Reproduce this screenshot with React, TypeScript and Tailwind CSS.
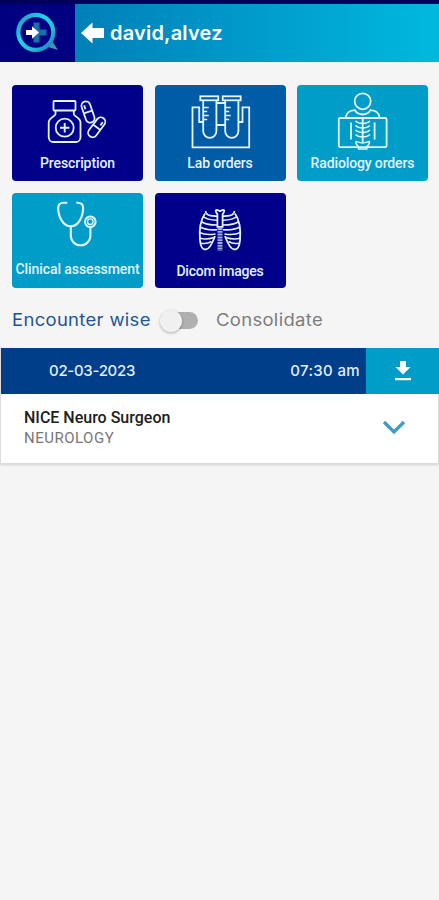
import type { ReactNode } from "react";

type Tile = {
  label: string;
  bg: string;
  labelClass: string;
  icon: ReactNode;
};

const PrescriptionIcon = () => (
  <>
    <rect x="41.5" y="16" width="22" height="9.5" rx="0.8" />
    <path d="M43.5 26v3.2c0 2-6.8 3.2-6.8 8.4v14.6a4.8 4.8 0 0 0 4.8 4.8h22.2a4.8 4.8 0 0 0 4.8-4.8V37.6c0-5.2-6.7-6.4-6.7-8.4V26" />
    <circle cx="52.7" cy="42.7" r="9" />
    <path d="M52.7 38v9.4M48 42.7h9.4" strokeWidth="1.9" />
    <g transform="rotate(-19 76 27)">
      <rect x="71.6" y="16" width="8.8" height="22" rx="4.4" />
      <path d="M71.6 27h8.8M74.5 19.5v4" />
    </g>
    <g transform="rotate(37 84.7 42.3)">
      <rect x="80.2" y="31" width="9" height="22.6" rx="4.5" fill="#00008b" />
      <path d="M80.2 42.3h9M86.5 34.5v4" />
    </g>
  </>
);

const LabIcon = () => (
  <>
    <rect x="45.3" y="11.3" width="18" height="4" />
    <rect x="67.7" y="11.3" width="18" height="4" />
    <path d="M48.2 15.5v30.7a6.6 6.6 0 0 0 13.2 0V15.5M70.2 15.5v30.7a6.6 6.6 0 0 0 13.2 0V15.5" />
    <path d="M48.2 37h-4V22.3h-6.7v40h56.7v-40h-6.7V37h-4M61.5 40h8.7M61.5 18h8.7" />
    <path d="M48.2 22.5h5.5M48.2 26.5h4M48.2 30.5h5.5M48.2 34.5h4M70.2 22.5h5.5M70.2 26.5h4M70.2 30.5h5.5M70.2 34.5h4" strokeWidth="1.3" />
  </>
);

const RadiologyIcon = () => (
  <>
    <circle cx="65.7" cy="16.3" r="8" />
    <path d="M48.8 32.5c.6-4.5 3.7-7 9.2-7.3 1.500 3 4 4.300 7.700 4.300s6.200-1.300 7.700-4.300c5.500.3 8.600 2.800 9.200 7.300" />
    <rect x="41.8" y="33" width="47.8" height="29.2" rx="1.5" />
    <path d="M54 37.5v17M77.6 37.5v17M65.7 33v24" />
    <path d="M58.5 36c2 2 4.500 2.500 7.200 2.500s5.200-.5 7.200-2.500M58.500 40.500c2 2 4.500 2.500 7.200 2.500s5.200-.5 7.200-2.500M58.500 45c2 2 4.500 2.500 7.200 2.500s5.200-.5 7.200-2.500M58.500 49.500c2 2 4.500 2.500 7.200 2.500s5.200-.5 7.200-2.500" strokeWidth="1.5" />
    <path d="M59 56.500c1.500 0 2.500 1.500 6.700 1.500s5.200-1.500 6.700-1.500c.3 2.500-1 4-2.500 5v2.500h-8.400v-2.500c-1.500-1-2.800-2.500-2.500-5z" strokeWidth="1.4" />
  </>
);

const StethoscopeIcon = () => (
  <>
    <path d="M55.3 9.7h-3.600c-3.300 0-5.500 2-5.500 5.300 0 8.500 4.800 18.300 12.600 18.300S71.100 23.500 71.100 15c0-3.300-2.200-5.300-5.500-5.300h-1.300" strokeWidth="2.1" />
    <path d="M58.8 33.3v9.200a9.800 9.800 0 0 0 19.600 0v-8" strokeWidth="2.1" />
    <circle cx="78.3" cy="28.7" r="5.3" strokeWidth="2" />
    <circle cx="78.3" cy="28.7" r="2.8" strokeWidth="1.3" />
  </>
);

const RibsIcon = () => (
  <>
    <path d="M50.5 18c.3 2.500 2 4.200 5 4.600l7 .8M79.500 18c-.3 2.500-2 4.200-5 4.600l-7 .8" />
    <path d="M61.200 17c1.500-.8 2.500 1 3.800 1s2.300-1.800 3.800-1c1.500 1.200-.8 3-1.200 4.500v12.300h-5.200V21.500c-.4-1.500-2.700-3.300-1.200-4.500z" />
    <path d="M50 20.500c-4.500 6.500-6 16.500-5 27 .5 5.500 2.500 9 5.500 9s6.500-5 9.500-13.500M80 20.500c4.500 6.500 6 16.500 5 27-.5 5.500-2.500 9-5.500 9s-6.500-5-9.500-13.500" />
    <path d="M48 23.500c3.500 3 9 3.500 14 3.800M46 28.500c4 3 10 3.500 16 3.500M45 34c4.500 2.500 10.500 3.200 17 2.800M44.500 39.500c4.500 2.200 10 2.500 16 1.500M44.500 45c4.500 1.500 9 1.300 14.500-.5M45.500 50c3.500 1 7 .8 11-1.500M82 23.500c-3.500 3-9 3.500-14 3.800M84 28.500c-4 3-10 3.500-16 3.500M85 34c-4.500 2.500-10.500 3.200-17 2.800M85.500 39.500c-4.500 2.200-10 2.500-16 1.500M85.500 45c-4.500 1.500-9 1.300-14.500-.5M84.500 50c-3.500 1-7 .8-11-1.500" strokeWidth="1.6" />
    <path d="M65 35v23" strokeWidth="5" strokeDasharray="2 0.8" opacity="0.7" />
  </>
);

const tiles: Tile[] = [
  { label: "Prescription", bg: "bg-[#00008b]", labelClass: "tracking-[-0.09px]", icon: <PrescriptionIcon /> },
  { label: "Lab orders", bg: "bg-[#005ca6]", labelClass: "tracking-[-0.15px]", icon: <LabIcon /> },
  { label: "Radiology orders", bg: "bg-[#009dc8]", labelClass: "tracking-[-0.13px]", icon: <RadiologyIcon /> },
  { label: "Clinical assessment", bg: "bg-[#009dc8]", labelClass: "tracking-[-0.08px]", icon: <StethoscopeIcon /> },
  { label: "Dicom images", bg: "bg-[#00008b]", labelClass: "tracking-[-0.2px]", icon: <RibsIcon /> },
];

function Logo() {
  return (
    <svg width="75" height="57" viewBox="0 0 75 57" fill="none">
      <defs>
        <linearGradient id="ring" x1="0" y1="0" x2="1" y2="1">
          <stop offset="0" stopColor="#2592c9" />
          <stop offset="0.4" stopColor="#20d5e8" />
          <stop offset="0.7" stopColor="#23bddc" />
          <stop offset="1" stopColor="#1a6fb5" />
        </linearGradient>
      </defs>
      <path d="M52 37l6 9-10-3z" fill="#4593bd" />
      <circle cx="35.800" cy="28.300" r="17.500" stroke="url(#ring)" strokeWidth="4.2" />
      <path d="M33.500 18.500h6v7h7v6h-7v7h-6z" fill="#176fac" />
      <path d="M26 26h6v-3.800l7 6.300-7 6.300V31h-6z" fill="#fff" />
    </svg>
  );
}

function Header() {
  return (
    <header className="border-t-4 border-[#00005a]">
      <div className="flex h-[58px] bg-linear-to-r from-[#0074ae] to-[#00b9de]">
        <div className="w-[75px] bg-[#000080]">
          <Logo />
        </div>
        <div className="flex items-center pl-1.5">
          <svg width="24" height="22" viewBox="0 0 24 22" fill="#fff">
            <path d="M0 11L11.5 .5v5.500H23v10H11.500v5.500z" />
          </svg>
          <span className="ml-[5px] text-[20px] leading-6 font-semibold tracking-[0.2px] text-white">david,alvez</span>
        </div>
      </div>
    </header>
  );
}

export default function App() {
  return (
    <div className="h-[900px] w-[439px] overflow-hidden bg-[#f5f5f5] font-[Inter,sans-serif]">
      <Header />

      {/* Record categories */}
      <div className="grid grid-cols-[131px_131px_131px] gap-x-[11.5px] gap-y-3 pt-[23px] pl-3">
        {tiles.map(({ label, bg, labelClass, icon }, i) => (
          <button key={label} className={`flex h-[95.5px] flex-col items-center rounded-[4px] ${bg}`}>
            <svg
              width="131"
              height="70"
              viewBox="0 0 131 70"
              fill="none"
              stroke="#e3f3ff"
              strokeWidth="1.8"
              className={i === 3 ? "-mb-[3px] shrink-0" : "-mb-px shrink-0"}
            >
              {icon}
            </svg>
            <span className={`font-[Roboto,sans-serif] text-[14px] leading-[18px] font-medium whitespace-nowrap text-[#e4f2fb] ${labelClass}`}>
              {label}
            </span>
          </button>
        ))}
      </div>

      {/* View toggle */}
      <div className="mt-[18px] flex h-7 items-center pl-3 text-[17px] whitespace-nowrap">
        <span className="w-[149px] pt-px">
          <span className="inline-block origin-left scale-x-[1.085] tracking-[0.3px] text-[#1d5496]">Encounter wise</span>
        </span>
        <div className="relative h-[17px] w-[37px] rounded-full bg-[#b0b0b0]">
          <div className="absolute -top-[2px] -left-[1px] size-[22px] rounded-full bg-[#f0f0f0] shadow-[0_1px_3px_rgba(0,0,0,0.3)]" />
        </div>
        <span className="ml-[18px] inline-block origin-left scale-x-[1.085] pt-px tracking-[0.3px] text-[#7c7c7c]">Consolidate</span>
      </div>

      {/* Encounter card */}
      <section className="mt-[14px] border border-t-0 border-[#dcdcdc] bg-white shadow-[0_1px_2px_rgba(0,0,0,0.15)]">
        <div className="-mr-px flex h-[46px] items-center bg-[#003e8a] text-[15px] font-medium text-[#e3edfa]">
          <span className="ml-12 tracking-[-0.3px]">02-03-2023</span>
          <span className="mr-[6px] ml-auto tracking-[0.35px]">07:30 am</span>
          <button className="flex h-full w-[73px] items-center justify-center bg-[#009dc8]">
            <svg width="18" height="22" viewBox="0 0 18 22" fill="#fff">
              <path d="M6 1h6v6h4.500L9 14.500 1.500 7H6zM1 18h16v2.300H1z" />
            </svg>
          </button>
        </div>
        <div className="flex h-[69px] items-center justify-between pr-8 pb-0.5 pl-[23px] font-[Roboto,sans-serif]">
          <div>
            <p className="text-[16px] leading-[21px] font-medium text-[#202020]">NICE Neuro Surgeon</p>
            <p className="text-[15px] leading-[21px] tracking-[0.5px] text-[#777]">NEUROLOGY</p>
          </div>
          <svg width="24" height="16" viewBox="0 0 24 16" fill="none" stroke="#3c9bc8" strokeWidth="3.2">
            <path d="M2 2l10 10L22 2" />
          </svg>
        </div>
      </section>
    </div>
  );
}
